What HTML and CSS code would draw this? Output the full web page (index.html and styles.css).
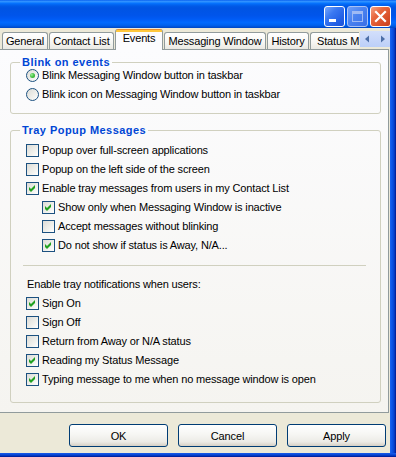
FILE: index.html
```html
<!DOCTYPE html>
<html>
<head>
<meta charset="utf-8">
<link rel="stylesheet" href="styles.css">
</head>
<body>
<div class="window">
  <div class="titlebar">
    <div class="cbtn min"><svg width="19" height="19" viewBox="0 0 19 19"><rect x="4" y="12" width="7" height="3" fill="#fff"/></svg></div>
    <div class="cbtn max"><svg width="19" height="19" viewBox="0 0 19 19"><rect x="4.5" y="4.5" width="10" height="10" fill="none" stroke="#9fbaf4"/><rect x="4" y="4" width="11" height="3" fill="#9fbaf4"/></svg></div>
    <div class="cbtn close"><svg width="19" height="19" viewBox="0 0 19 19"><path d="M5 5 L14 14 M14 5 L5 14" stroke="#fff" stroke-width="2.2" stroke-linecap="square"/></svg></div>
  </div>
  <div class="frame">
    <div class="client">
      <div class="tabbar">
        <div class="tab t-general">General</div>
        <div class="tab t-contact">Contact List</div>
        <div class="tab t-events active">Events</div>
        <div class="tab t-msg">Messaging Window</div>
        <div class="tab t-history">History</div>
        <div class="tab t-status">Status Messages</div>
        <div class="spin">
          <div class="sbtn"><svg width="15" height="16" viewBox="0 0 15 16"><path d="M9 4.5 L5 8 L9 11.5 Z" fill="#4d6fa8"/></svg></div>
          <div class="sbtn"><svg width="15" height="16" viewBox="0 0 15 16"><path d="M6 4.5 L10 8 L6 11.5 Z" fill="#4d6fa8"/></svg></div>
        </div>
      </div>
      <div class="panel">
        <fieldset class="group g1">
          <legend>Blink on events</legend>
          <div class="list">
            <div class="row"><span class="radio on"></span><span>Blink Messaging Window button in taskbar</span></div>
            <div class="row"><span class="radio"></span><span>Blink icon on Messaging Window button in taskbar</span></div>
          </div>
        </fieldset>
        <fieldset class="group g2">
          <legend>Tray Popup Messages</legend>
          <div class="list first">
            <div class="row"><span class="cb"></span><span>Popup over full-screen applications</span></div>
            <div class="row"><span class="cb"></span><span>Popup on the left side of the screen</span></div>
            <div class="row"><span class="cb"><svg width="11" height="11" viewBox="0 0 11 11"><polygon points="2,4 4,6 8,2 8,5 4,9 2,7" fill="#21a121"/></svg></span><span>Enable tray messages from users in my Contact List</span></div>
            <div class="row sub"><span class="cb"><svg width="11" height="11" viewBox="0 0 11 11"><polygon points="2,4 4,6 8,2 8,5 4,9 2,7" fill="#21a121"/></svg></span><span>Show only when Messaging Window is inactive</span></div>
            <div class="row sub"><span class="cb"></span><span>Accept messages without blinking</span></div>
            <div class="row sub"><span class="cb"><svg width="11" height="11" viewBox="0 0 11 11"><polygon points="2,4 4,6 8,2 8,5 4,9 2,7" fill="#21a121"/></svg></span><span>Do not show if status is Away, N/A...</span></div>
          </div>
          <div class="sep"></div>
          <div class="list">
            <div class="row label">Enable tray notifications when users:</div>
            <div class="row"><span class="cb"><svg width="11" height="11" viewBox="0 0 11 11"><polygon points="2,4 4,6 8,2 8,5 4,9 2,7" fill="#21a121"/></svg></span><span>Sign On</span></div>
            <div class="row"><span class="cb"></span><span>Sign Off</span></div>
            <div class="row"><span class="cb"></span><span>Return from Away or N/A status</span></div>
            <div class="row"><span class="cb"><svg width="11" height="11" viewBox="0 0 11 11"><polygon points="2,4 4,6 8,2 8,5 4,9 2,7" fill="#21a121"/></svg></span><span>Reading my Status Message</span></div>
            <div class="row"><span class="cb"><svg width="11" height="11" viewBox="0 0 11 11"><polygon points="2,4 4,6 8,2 8,5 4,9 2,7" fill="#21a121"/></svg></span><span>Typing message to me when no message window is open</span></div>
          </div>
        </fieldset>
      </div>
      <div class="btns">
        <button class="btn">OK</button>
        <button class="btn">Cancel</button>
        <button class="btn">Apply</button>
      </div>
    </div>
    <div class="frame-right"></div>
  </div>
  <div class="frame-bottom"></div>
</div>
</body>
</html>
```
FILE: styles.css
```css
* { box-sizing: border-box; }
body {
  margin: 0;
  font-family: "Liberation Sans", Arial, sans-serif;
  font-size: 11px;
  letter-spacing: -0.15px;
  color: #000;
  background: #fff;
}
.window {
  width: 396px;
  height: 457px;
  display: flex;
  flex-direction: column;
}
.titlebar {
  height: 28px;
  flex: none;
  display: flex;
  justify-content: flex-end;
  align-items: flex-start;
  gap: 2px;
  padding: 6px 5px 0 0;
  background: linear-gradient(to bottom,
    #0058ee 0%, #3593ff 4%, #288eff 7%, #127dff 10%, #036ffc 13%,
    #0262ee 18%, #0057e5 24%, #0054e3 30%, #0055eb 56%, #005bf5 68%,
    #026afe 80%, #0062ef 90%, #0052d6 96%, #0046c0 100%);
}
.cbtn {
  width: 21px;
  height: 21px;
  border: 1px solid #fff;
  border-radius: 3px;
  display: flex;
}
.cbtn.min {
  background: linear-gradient(135deg, #78a8fc 0%, #3a78f2 35%, #2461e6 70%, #1d52d6 100%);
}
.cbtn.max {
  border-color: #a9c2f5;
  background: linear-gradient(135deg, #6e9ef8 0%, #4a82f0 45%, #3a6fe6 100%);
}
.cbtn.close {
  background: linear-gradient(135deg, #f4a283 0%, #e8683f 35%, #d9502a 70%, #c8401c 100%);
}
.frame {
  flex: 1;
  display: flex;
  min-height: 0;
}
.client {
  width: 390px;
  flex: none;
  display: flex;
  flex-direction: column;
  background: #ece9d8;
}
.frame-right {
  flex: 1;
  background: linear-gradient(to right, #1c64f2 0%, #0b53e6 35%, #0840cc 70%, #00178c 100%);
}
.frame-bottom {
  height: 4px;
  flex: none;
  background: linear-gradient(to bottom, #1a5cea 0%, #0a48d8 40%, #0032b8 75%, #00148a 100%);
}

/* tabs */
.tabbar {
  height: 21px;
  flex: none;
  display: flex;
  align-items: flex-end;
  gap: 1px;
  padding-left: 2px;
}
.tab {
  height: 17px;
  flex: none;
  border: 1px solid #919b9c;
  border-bottom: none;
  border-radius: 3px 3px 0 0;
  background: linear-gradient(#ffffff, #f7f7f4 55%, #eae9e2);
  display: flex;
  align-items: center;
  justify-content: center;
  white-space: nowrap;
}
.t-general { width: 46px; }
.t-contact { width: 65px; }
.t-events { width: 48px; }
.t-msg { width: 102px; }
.t-history { width: 42px; }
.t-status {
  width: 49px;
  border-right: none;
  border-top-right-radius: 0;
  justify-content: flex-start;
  padding-left: 6px;
  overflow: hidden;
}
.tab.active {
  height: 21px;
  margin-bottom: -1px;
  border-top: none;
  padding: 2px 0 5px;
  background: linear-gradient(#e68b2c 0, #e68b2c 1px, #ffc83c 1px, #ffc83c 3px, #fcfcfe 3px);
  position: relative;
  z-index: 1;
}
.spin {
  width: 30px;
  height: 16px;
  flex: none;
  align-self: flex-start;
  margin-top: 3px;
  display: flex;
}
.sbtn {
  width: 15px;
  height: 16px;
  background: linear-gradient(#d3dffb, #bccff8);
  display: flex;
}

/* panel */
.panel {
  height: 364px;
  flex: none;
  margin-right: 1px;
  border: 1px solid #919b9c;
  border-left: none;
  background: linear-gradient(#fcfcfe, #f5f4f0);
  padding: 6px 7px 0 10px;
}
.group {
  margin: 0;
  padding: 0 0 12px 0;
  border: 1px solid #d0d0bf;
  border-radius: 3px;
  min-width: 0;
}
.group legend {
  margin-left: 9px;
  padding: 0 2px;
  font-weight: bold;
  color: #0046d5;
  line-height: 13px;
  letter-spacing: 0.45px;
}
.g2 {
  margin-top: 10px;
  padding-bottom: 16px;
}
.list {
  display: flex;
  flex-direction: column;
  gap: 6px;
  padding-left: 15px;
}
.g2 .list.first { margin-top: 7px; }
.row {
  height: 13px;
  display: flex;
  align-items: center;
  gap: 3px;
  white-space: nowrap;
  line-height: 13px;
}
.row.sub { padding-left: 16px; }
.row.label { padding-left: 1px; }
.sep {
  height: 1px;
  background: #d0d0bf;
  margin: 13px 14px 12px 12px;
}
.cb {
  width: 13px;
  height: 13px;
  flex: none;
  border: 1px solid #1c5180;
  background: linear-gradient(135deg, #dcdcd7 0%, #f0f0ec 60%, #ffffff 100%);
  display: flex;
}
.radio {
  width: 13px;
  height: 13px;
  flex: none;
  border: 1px solid #1c5180;
  border-radius: 50%;
  background: linear-gradient(135deg, #dcdcd7 0%, #f0f0ec 60%, #ffffff 100%);
  display: flex;
  align-items: center;
  justify-content: center;
}
.radio.on::after {
  content: "";
  width: 5px;
  height: 5px;
  border-radius: 50%;
  background: radial-gradient(circle at 35% 35%, #9ef09a 0%, #4cc449 45%, #21a121 100%);
}

/* buttons */
.btns {
  flex: 1;
  display: flex;
  justify-content: flex-end;
  align-items: flex-start;
  gap: 10px;
  padding: 11px 4px 0 0;
}
.btn {
  width: 99px;
  height: 23px;
  padding: 0;
  margin: 0;
  font: inherit;
  letter-spacing: inherit;
  color: #000;
  border: 1px solid #003c74;
  border-radius: 3px;
  background: linear-gradient(#ffffff 0%, #f6f6f3 45%, #ecebe6 80%, #d6d0c5 100%);
  display: flex;
  align-items: center;
  justify-content: center;
}
```
